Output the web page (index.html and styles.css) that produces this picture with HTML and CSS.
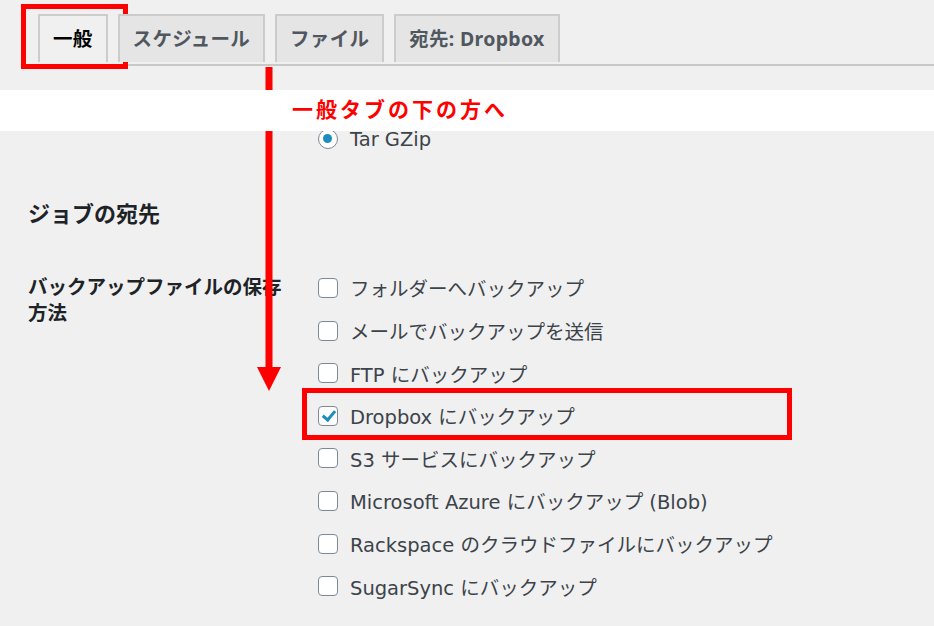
FILE: index.html
```html
<!DOCTYPE html>
<html lang="ja">
<head>
    <meta charset="UTF-8">
    <meta name="viewport" content="width=device-width, initial-scale=1.0">
    <title>ジョブ設定 - 一般</title>
    <link rel="stylesheet" href="styles.css">
</head>
<body>

<div class="top">
    <nav class="tabs">
        <a class="tab active">一般<span class="mark mark-tab"></span></a>
        <a class="tab">スケジュール</a>
        <a class="tab">ファイル</a>
        <a class="tab">宛先: Dropbox</a>
    </nav>
</div>

<div class="note"><span>一般タブの下の方へ</span></div>

<div class="panel">
    <div class="radio-row">
        <label class="opt"><input type="radio" name="format" checked>Tar GZip</label>
    </div>

    <h2>ジョブの宛先</h2>

    <div class="form-row">
        <div class="th">バックアップファイルの保存方法</div>
        <div class="opts">
            <label class="opt"><input type="checkbox">フォルダーへバックアップ</label>
            <label class="opt"><input type="checkbox">メールでバックアップを送信</label>
            <label class="opt"><input type="checkbox">FTP にバックアップ</label>
            <label class="opt"><input type="checkbox" checked>Dropbox にバックアップ<span class="mark mark-row"></span></label>
            <label class="opt"><input type="checkbox">S3 サービスにバックアップ</label>
            <label class="opt"><input type="checkbox">Microsoft Azure にバックアップ (Blob)</label>
            <label class="opt"><input type="checkbox">Rackspace のクラウドファイルにバックアップ</label>
            <label class="opt"><input type="checkbox">SugarSync にバックアップ</label>
        </div>
    </div>
</div>

<!-- 注釈の矢印 -->
<svg class="arrow" width="24" height="324" viewBox="0 0 24 324">
    <rect x="8.5" y="0" width="7" height="301" fill="#ff0000"/>
    <polygon points="0,300 24,300 12,324" fill="#ff0000"/>
</svg>

</body>
</html>
```

FILE: styles.css
```css
body {
    margin: 0;
    background-color: #f0f0f0;
    font-family: "DejaVu Sans", "Noto Sans CJK JP", sans-serif;
    color: #3c434a;
}
.top {
    height: 90px;
    overflow: hidden;
}
.tabs {
    display: flex;
    align-items: flex-start;
    height: 50px;
    margin-left: 21px;
    padding: 14px 0 0 17px;
    border-bottom: 2px solid #c8c8c8;
}
.tab {
    position: relative;
    box-sizing: border-box;
    height: 48px;
    padding: 0 13px;
    margin-right: 10px;
    border: 2px solid #cccccc;
    border-bottom: 0;
    background-color: #e5e5e5;
    color: #50575e;
    font-family: "Noto Sans", "Noto Sans CJK JP", sans-serif;
    font-size: 19.5px;
    font-weight: 700;
    line-height: 46px;
    letter-spacing: 0.3px;
}
.tab.active {
    background-color: #f0f0f0;
    color: #000;
}
.note {
    position: relative;
    z-index: 1;
    height: 41px;
    background: #fff;
}
.note span {
    display: block;
    margin-left: 292px;
    color: #ff0000;
    font-size: 21px;
    font-weight: 700;
    letter-spacing: 3px;
    line-height: 41px;
}
.panel {
    box-sizing: border-box;
    min-height: 495px;
    margin: 0 2px;
    padding-left: 26px;
    overflow: hidden;
}
.radio-row {
    margin-top: -4px;
    padding-left: 290px;
}
.radio-row .opt {
    height: 24px;
}
.radio-row input {
    margin-bottom: 4px;
}
h2 {
    margin: 49px 0 0;
    color: #1d2327;
    font-size: 22px;
    font-weight: 700;
    line-height: 30px;
}
.form-row {
    display: flex;
    margin-top: 36.7px;
}
.th {
    box-sizing: border-box;
    width: 290px;
    padding: 8.6px 28px 0 0;
    color: #1d2327;
    font-size: 19.5px;
    font-weight: 700;
    line-height: 25.5px;
}
.opts {
    display: flex;
    flex-direction: column;
}
.opt {
    position: relative;
    display: flex;
    align-items: center;
    height: 42.6px;
    font-size: 19.5px;
    white-space: nowrap;
}
input[type="checkbox"],
input[type="radio"] {
    -webkit-appearance: none;
    appearance: none;
    position: relative;
    flex: none;
    box-sizing: border-box;
    width: 20px;
    height: 20px;
    margin: 0 12px 0 0;
    border: 1.5px solid #7e8993;
    border-radius: 4px;
    background: #fff;
}
input[type="radio"] {
    border-radius: 50%;
}
input[type="radio"]:checked::before {
    content: "";
    position: absolute;
    left: 3.75px;
    top: 3.75px;
    width: 9.5px;
    height: 9.5px;
    border-radius: 50%;
    background: #1e8cbe;
}
input[type="checkbox"]:checked::before {
    content: "";
    position: absolute;
    left: 5.5px;
    top: 1.5px;
    width: 5px;
    height: 10px;
    border: solid #1e8cbe;
    border-width: 0 3px 3px 0;
    transform: rotate(40deg);
}
.mark {
    position: absolute;
    box-sizing: border-box;
    border: 5px solid #ff0000;
}
.mark-tab {
    left: -18.7px;
    top: -12px;
    width: 107px;
    height: 65px;
}
.mark-row {
    left: -16px;
    top: -6.4px;
    width: 490px;
    height: 52px;
}
.arrow {
    position: absolute;
    left: 257px;
    top: 67px;
}
```
